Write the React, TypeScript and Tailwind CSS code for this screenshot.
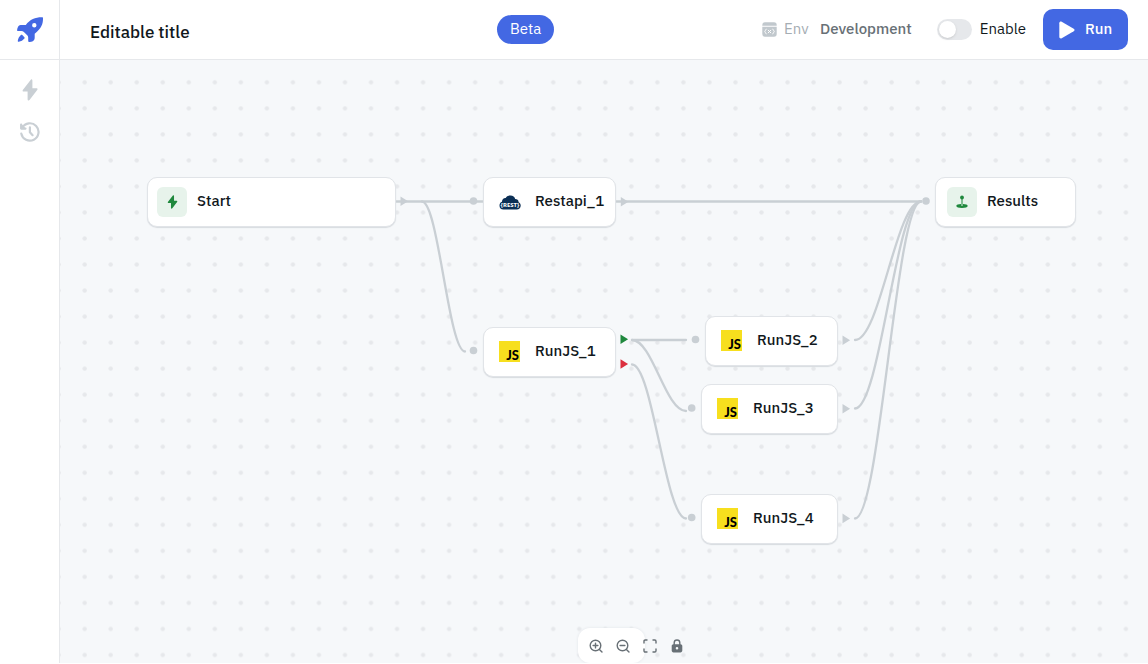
import type { ReactNode } from 'react';

type NodeProps = { className: string; label: string; children: ReactNode };

const Bolt = ({ className }: { className: string }) => (
  <svg viewBox="0 0 16 22" className={className} fill="currentColor" aria-hidden="true">
    <path d="M8.6.9 1 10.7c-.8 1-.3 1.8.7 1.8h3.9V20c0 1.7 1.2 2 2.1.8L15.2 11c.7-1 .3-1.8-.8-1.8h-4V1.8C10.4.1 9.4-.2 8.6.9Z" />
  </svg>
);

const Rocket = () => (
  <svg viewBox="0 0 28 28" className="size-7" aria-hidden="true">
    <path
      fill="#4368e3"
      fillRule="evenodd"
      d="M26.1 1.3c.6 0 1 .4.9 1 .1 5.4-1.5 10.2-8.3 15.4v3.8c0 1.8-.6 3-1.9 3.7-1.1.6-2.3.9-3.7.8-.6 0-.9-.3-.9-.9v-3.3c0-1.1-.3-1.8-1-2.5l-3.3-3.2c-.7-.7-1.5-1-2.5-1H2c-.6 0-1-.4-.9-1 .1-1.4.4-2.7 1.1-3.7C3 9.3 4.2 8.9 5.7 8.9h4.1C14 3.5 19.5 1.2 26.1 1.3ZM18.3 7a2.2 2.2 0 1 0 0 4.4 2.2 2.2 0 0 0 0-4.4ZM4.9 19c.5-.5 1-.5 1.4 0l2.1 2.2c.4.5.4 1 0 1.4-1.3 1.5-3.3 3.1-5.7 3.2-.7 0-1-.4-.9-1 .2-2.3 1.5-4.3 3.1-5.8Z"
    />
  </svg>
);

const HistoryIcon = () => (
  <svg viewBox="0 0 20 20" className="size-5" fill="none" stroke="currentColor" strokeWidth="2.2" strokeLinecap="round" strokeLinejoin="round" aria-hidden="true">
    <path d="M1.2 2.6v4h4.3M1.3 11.6A8.7 8.7 0 1 0 2.3 5.6" />
    <path d="M1.2 2.6 5.4 6.6H1.2Z" fill="currentColor" strokeWidth="1" />
    <path d="M9.9 5.4v4.9l2.7 2.9" />
  </svg>
);

const EnvIcon = () => (
  <svg viewBox="0 0 15 15" className="size-[15px]" aria-hidden="true">
    <path fill="#c1c8cd" d="M3 .3h9A2.7 2.7 0 0 1 14.7 3v.7H.3V3A2.7 2.7 0 0 1 3 .3ZM.3 4.8h14.4V12a2.7 2.7 0 0 1-2.7 2.7H3A2.7 2.7 0 0 1 .3 12Z" />
    <path fill="none" stroke="#fff" strokeLinecap="round" d="M4.2 7.2c-1.2.2-.5 1.8-1.4 2.3.9.5.2 2.1 1.4 2.3M10.8 7.2c1.2.2.5 1.8 1.4 2.3-.9.5-.2 2.1-1.4 2.3M6.2 8.2l2.6 2.6M8.8 8.2l-2.6 2.6" />
  </svg>
);

const JsIcon = () => (
  <svg viewBox="0 0 21 21" className="mx-[15px] mb-px size-[21px] shrink-0 overflow-visible" aria-hidden="true">
    <path fill="#f7df1e" d="M0 0h21v21H0z" />
    <text x="20" y="19" textAnchor="end" fontSize="13" fontWeight="900" fontFamily="Lato, sans-serif">JS</text>
  </svg>
);

const RestIcon = () => (
  <svg viewBox="0 0 22 15" className="mr-3.5 ml-[15px] h-[15px] w-[22px] shrink-0 overflow-visible" aria-hidden="true">
    <path fill="#0b2f55" d="M4.5 14.5A4 4 0 0 1 .5 10.5C.5 8.5 1.5 7.3 3 6.7 2.9 4.3 4.7 2.7 6.7 2.9 8 .9 9.7.4 11.5.5c2.5.1 4.2 1.500 4.700 3.500 2 0 3.500 1.300 3.400 3.300 1.300.6 2.200 1.800 2.100 3.500-.1 2.300-1.700 3.700-3.900 3.700Z" />
    <text x="11" y="12.3" textAnchor="middle" fontSize="6" fontWeight="700" fill="#fff" fontFamily="'Noto Sans', sans-serif">{'{REST}'}</text>
  </svg>
);

const FlowNode = ({ className, label, children }: NodeProps) => (
  <div className={`absolute flex h-[50px] items-center rounded-[10px] border border-[#e1e4e8] bg-white shadow-[0_1px_1px_#d7dbdf] ${className}`}>
    {children}
    <span className="pb-[3px] text-[15px] leading-5 font-medium whitespace-nowrap text-[#11181c]">{label}</span>
  </div>
);

const Badge = ({ children }: { children: ReactNode }) => (
  <span className="mr-2.5 flex size-[30px] shrink-0 items-center justify-center rounded-md bg-[#e7f3eb] text-[#1f883d]">{children}</span>
);

const edge = (x1: number, y1: number, x2: number, y2: number) => {
  const reach = (x2 - x1) * 0.38;
  return `M${x1} ${y1}C${x1 + reach} ${y1} ${x2 - reach} ${y2} ${x2} ${y2}`;
};
const edges = [
  edge(335, 141.5, 424, 141.5),
  edge(362, 141.5, 405, 291.5),
  edge(555, 141.5, 861, 141.5),
  edge(572, 280, 626, 280),
  edge(572, 280, 626, 351),
  edge(572, 304.5, 626, 458.5),
  edge(795, 280, 861, 141.5),
  edge(795, 348.5, 861, 141.5),
  edge(795, 458.5, 861, 141.5),
];
const inputs = [[413.5, 141], [413.5, 290.5], [635.5, 279.5], [631.7, 348], [631.7, 457.5], [866, 141]];
const outputs: [number, number, string][] = [
  [340.5, 141.2, '#c9cfd4'],
  [560.8, 141.8, '#c9cfd4'],
  [560.5, 279.2, '#1f883d'],
  [560.5, 304, '#dc2f3e'],
  [782.5, 280.3, '#c9cfd4'],
  [782.5, 348.7, '#c9cfd4'],
  [782.5, 458.4, '#c9cfd4'],
];

const controlIcons: { name: string; icon: ReactNode }[] = [
  {
    name: 'Zoom in',
    icon: <><circle cx="6.500" cy="6.500" r="5.300" /><path d="m10.4 10.4 2.6 2.6M6.5 4.1v4.8M4.1 6.5h4.8" /></>,
  },
  {
    name: 'Zoom out',
    icon: <><circle cx="6.500" cy="6.500" r="5.300" /><path d="m10.4 10.4 2.6 2.6M4.1 6.5h4.8" /></>,
  },
  {
    name: 'Fit view',
    icon: <path d="M1 4V2.2Q1 1 2.2 1H4M10 1h1.8Q13 1 13 2.2V4M13 10v1.8q0 1.2-1.2 1.2H10M4 13H2.2Q1 13 1 11.8V10" />,
  },
  {
    name: 'Lock canvas',
    icon: <><path fill="currentColor" stroke="none" fillRule="evenodd" d="M3.5 5.2h7c1.1 0 1.8.7 1.8 1.8v4.6c0 1.1-.7 1.8-1.8 1.8h-7c-1.1 0-1.8-.7-1.8-1.8V7c0-1.100.7-1.800 1.800-1.800ZM7 8a1.300 1.300 0 1 0 0 2.600A1.300 1.300 0 0 0 7 8Z" /><path d="M4.2 6V3.8a2.8 2.8 0 0 1 5.6 0V6" /></>,
  },
];

export default function App() {
  return (
    <div className="flex h-screen bg-white pb-px font-['IBM_Plex_Sans',Roboto,sans-serif] text-[#11181c]">
      <aside className="flex w-[60px] shrink-0 flex-col border-r border-[#e6e8eb]">
        <a href="#home" aria-label="Home" className="flex h-[60px] items-center justify-center border-b border-[#e6e8eb]">
          <Rocket />
        </a>
        <nav className="flex flex-col items-center gap-5 pt-[19px] text-[#c9cfd4]">
          <button aria-label="Triggers" className="flex h-[22px] items-center"><Bolt className="h-[22px] w-4" /></button>
          <button aria-label="History" className="flex h-[22px] items-center"><HistoryIcon /></button>
        </nav>
      </aside>

      <div className="flex min-w-0 flex-1 flex-col">
        <header className="flex h-[60px] shrink-0 items-center border-b border-[#e6e8eb] pr-5 pl-[30px] text-[15px]">
          <input
            aria-label="Workflow title"
            defaultValue="Editable title"
            className="w-[407px] min-w-0 bg-transparent pt-1 text-[17px] leading-6 font-medium outline-none"
          />
          <span className="flex h-[29px] shrink-0 items-center rounded-full bg-[#4368e3] px-[13px] text-white">Beta</span>
          <div className="ml-auto flex shrink-0 items-center">
            <button className="flex items-center pr-[25px]">
              <EnvIcon />
              <span className="w-[43px] pb-px pl-[7px] text-left text-[#a5adb3]">Env</span>
              <span className="pb-px font-medium text-[#687076]">Development</span>
            </button>
            <label className="flex items-center gap-2 pr-[17px]">
              <input type="checkbox" role="switch" className="peer sr-only" />
              <span className="flex h-[21px] w-[35px] items-center rounded-full bg-[#e6e8eb] p-0.5 peer-checked:justify-end peer-checked:bg-[#4368e3]">
                <span className="size-[17px] rounded-full bg-white shadow-sm" />
              </span>
              <span className="pb-px">Enable</span>
            </label>
            <button className="flex h-[41px] w-[85px] items-center justify-center gap-2.5 rounded-[10px] bg-[#4368e3] font-medium text-white">
              <svg viewBox="0 0 16 18" className="h-[18px] w-4" fill="#fff" aria-hidden="true">
                <path d="M.3 2.3C.3.9 1.5.2 2.7.8l12 6.9c1.1.7 1.1 1.9 0 2.6l-12 6.9C1.5 17.8.3 17.1.3 15.7Z" />
              </svg>
              <span className="pb-px">Run</span>
            </button>
          </div>
        </header>

        <main className="relative flex-1 overflow-hidden bg-[#f6f8fa]">
          <svg className="absolute inset-0 size-full" aria-hidden="true">
            <defs>
              <pattern id="dots" x="11.6" y="9.3" width="26.03" height="26.03" patternUnits="userSpaceOnUse">
                <circle cx="13.1" cy="13" r="2.2" fill="#e6e8eb" />
              </pattern>
            </defs>
            <rect width="100%" height="100%" fill="url(#dots)" />
            <g fill="none" stroke="#c9cfd4" strokeWidth="2.3" strokeLinecap="round">
              {edges.map((d) => <path key={d} d={d} />)}
            </g>
            {inputs.map(([x, y]) => <circle key={`${x}-${y}`} cx={x} cy={y} r="3.8" fill="#c9cfd4" />)}
            {outputs.map(([x, y, fill]) => <path key={`${x}-${y}`} d={`M${x} ${y - 4.8}l7.6 4.8l-7.6 4.8z`} fill={fill} />)}
          </svg>

          <FlowNode className="top-[117px] left-[87px] w-[249px] pl-[9px]" label="Start">
            <Badge><Bolt className="h-3.5 w-[11px]" /></Badge>
          </FlowNode>
          <FlowNode className="top-[117px] left-[423px] w-[133px]" label="Restapi_1"><RestIcon /></FlowNode>
          <FlowNode className="top-[267px] left-[423px] w-[133px]" label="RunJS_1"><JsIcon /></FlowNode>
          <FlowNode className="top-[256px] left-[645px] w-[133px]" label="RunJS_2"><JsIcon /></FlowNode>
          <FlowNode className="top-[324px] left-[641px] w-[137px]" label="RunJS_3"><JsIcon /></FlowNode>
          <FlowNode className="top-[434px] left-[641px] w-[137px]" label="RunJS_4"><JsIcon /></FlowNode>
          <FlowNode className="top-[117px] left-[875px] w-[141px] pl-[11px]" label="Results">
            <Badge>
              <svg viewBox="0 0 12 14" className="h-3.5 w-3" fill="none" stroke="currentColor" aria-hidden="true">
                <circle cx="6" cy="2.5" r="1.9" fill="currentColor" stroke="none" />
                <path d="M6 3v8" />
                <path fill="currentColor" stroke="none" d="M5 9.1v2h2v-2c2.5 0 4.7.7 4.7 1.9S9.4 13 6 13 .3 12.2.3 11 2.5 9.1 5 9.1Z" />
              </svg>
            </Badge>
          </FlowNode>

          <div className="absolute bottom-0 left-[518px] flex h-[35px] w-[67px] items-center rounded-xl bg-white pl-1 text-[#687076] shadow-[0_0_3px_#e1e4e8]">
            {controlIcons.map(({ name, icon }) => (
              <button key={name} aria-label={name} className="flex h-7 w-[27px] shrink-0 items-center justify-center">
                <svg viewBox="0 0 14 14" className="size-3.5 shrink-0" fill="none" stroke="currentColor" strokeWidth="1.4" strokeLinecap="round" aria-hidden="true">{icon}</svg>
              </button>
            ))}
          </div>
        </main>
      </div>
    </div>
  );
}
